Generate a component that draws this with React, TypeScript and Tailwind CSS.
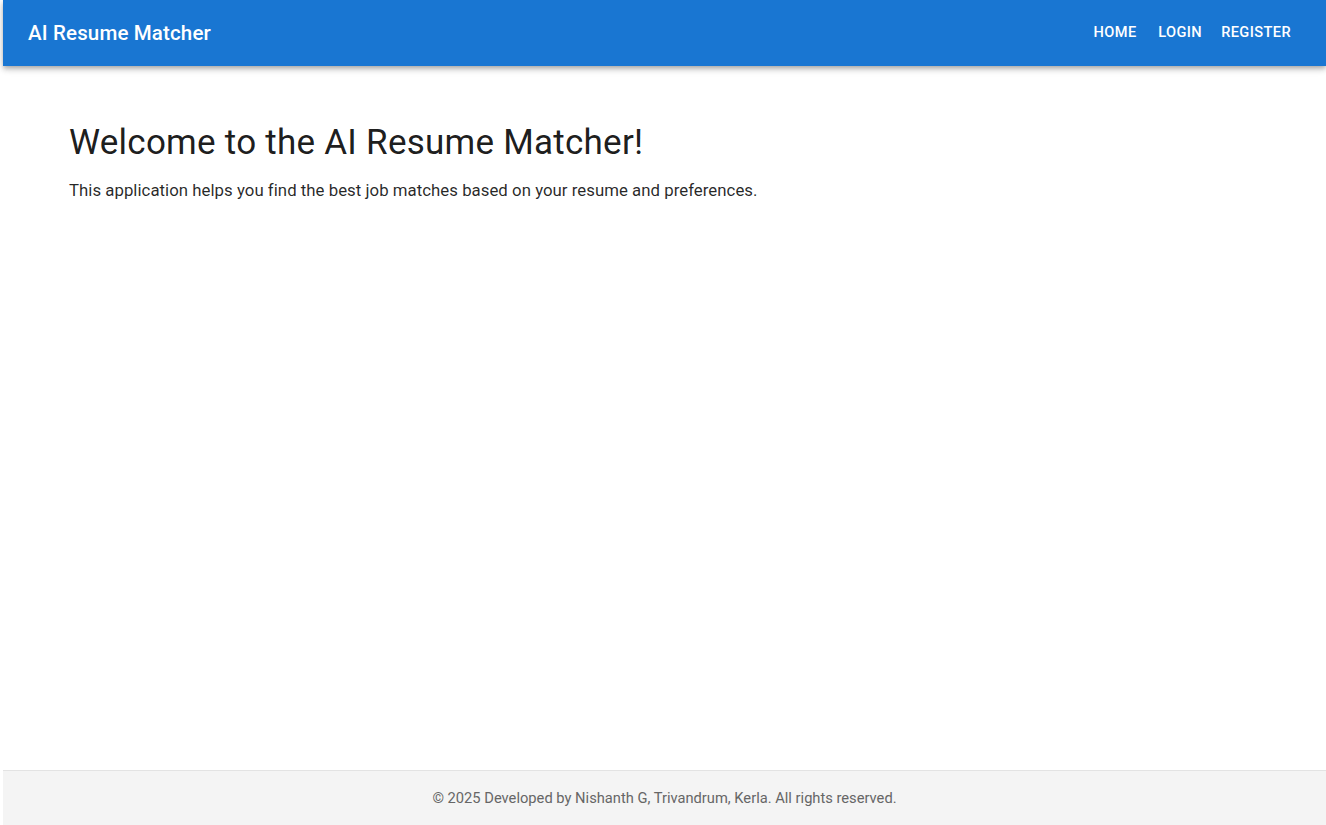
import React from 'react'

const navItems = ['Home', 'Login', 'Register']

const App = () => (
  <div className="min-h-[825px] flex flex-col bg-white pl-[3px] font-['Roboto',sans-serif]">
    <header className="h-[66px] w-full flex items-center justify-between pl-[25px] pr-[27px] bg-[#1976d2] text-white shadow-[0_2px_4px_-1px_rgba(0,0,0,0.2),0_4px_5px_0_rgba(0,0,0,0.14),0_1px_10px_0_rgba(0,0,0,0.12)]">
      <h1 className="text-[20.5px] font-medium tracking-[0.15px] pt-[1px]">AI Resume Matcher</h1>
      <nav className="flex items-center gap-[1px]">
        {navItems.map((item) => (
          <button
            key={item}
            className="min-w-[64px] px-[8px] py-[6px] text-[14.6px] font-medium uppercase tracking-[0.4px] text-white"
          >
            {item}
          </button>
        ))}
      </nav>
    </header>

    <main className="flex-1 pl-[66px] pt-[56px]">
      <h2 className="text-[35px] leading-[42px] text-black/90 tracking-[0.25px]">
        Welcome to the AI Resume Matcher!
      </h2>
      <p className="mt-[14px] text-[16.8px] leading-[24px] text-black/85 tracking-[0.03px]">
        This application helps you find the best job matches based on your resume and preferences.
      </p>
    </main>

    <footer className="h-[55px] flex items-center justify-center bg-[#f4f4f4] border-t border-[#e3e3e3]">
      <p className="text-[14.7px] text-[#666]">
        © 2025 Developed by Nishanth G, Trivandrum, Kerla. All rights reserved.
      </p>
    </footer>
  </div>
)

export default App
